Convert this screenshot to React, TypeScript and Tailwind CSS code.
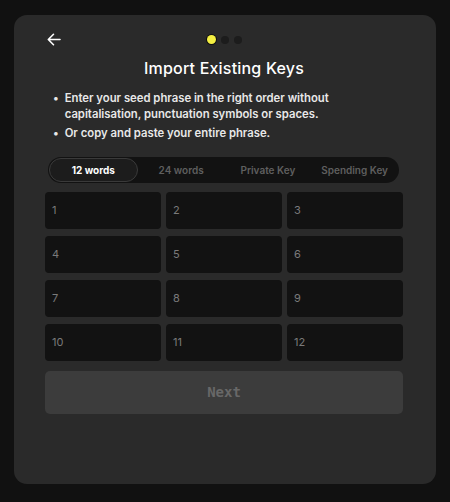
import React from "react";

const tabs = ["12 words", "24 words", "Private Key", "Spending Key"];
const words = Array.from({ length: 12 }, (_, i) => i + 1);

const App: React.FC = () => {
  return (
    <div
      className="w-[450px] h-[502px] bg-[#111111] pt-[15px] pl-[14px]"
      style={{ fontFamily: "Inter, 'Noto Sans', sans-serif" }}
    >
      <div className="w-[422px] h-[469px] rounded-[13px] bg-[#2a2a2a] pt-[18px] pl-[31px] pr-[33px]">
        {/* Header: back arrow + progress dots */}
        <div className="relative h-[13px] flex items-center">
          <svg
            className="ml-[2px] w-[14px] h-[13px] text-white"
            viewBox="0 0 14 13"
            fill="none"
            stroke="currentColor"
            strokeWidth={1.6}
            strokeLinecap="round"
            strokeLinejoin="round"
          >
            <path d="M13 6.5H1.5M6.5 1.3L1.3 6.5l5.2 5.2" />
          </svg>
          <div className="absolute left-0 right-0 top-0 h-[13px] flex items-center justify-center gap-[5px]">
            <span className="w-[9px] h-[9px] rounded-full bg-[#f4ef42] ring-1 ring-[#111]" />
            <span className="w-[8px] h-[8px] rounded-full bg-[#1c1c1c]" />
            <span className="w-[8px] h-[8px] rounded-full bg-[#1c1c1c]" />
          </div>
        </div>

        <h1 className="mt-[10px] text-center text-white text-[16px] leading-[24px] font-medium tracking-[0.2px]">
          Import Existing Keys
        </h1>

        <ul className="mt-[10px] pl-[8px] pr-[10px] text-[#e8e8e8] text-[11.3px] font-semibold">
          <li className="flex gap-[6px] leading-[16px]">
            <span>•</span>
            <span>
              Enter your seed phrase in the right order without capitalisation,
              punctuation symbols or spaces.
            </span>
          </li>
          <li className="flex gap-[6px] leading-[16px] mt-[3px]">
            <span>•</span>
            <span>Or copy and paste your entire phrase.</span>
          </li>
        </ul>

        {/* Tabs */}
        <div className="mt-[16px] ml-[3px] mr-[4px] h-[26px] rounded-full bg-[#121212] flex items-center p-[1px]">
          {tabs.map((t, i) => (
            <div
              key={t}
              className={
                i === 0
                  ? "flex-1 h-[24px] rounded-full bg-[#1c1c1c] border border-[#3a3a3a] flex items-center justify-center text-white text-[10px] font-bold"
                  : "flex-1 h-[24px] flex items-center justify-center text-[#5f5f5f] text-[10px] font-semibold"
              }
            >
              {t}
            </div>
          ))}
        </div>

        {/* Word inputs */}
        <div className="mt-[9px] grid grid-cols-3 gap-x-[5px] gap-y-[7px]">
          {words.map((n) => (
            <div
              key={n}
              className="h-[37px] rounded-[4px] bg-[#121212] flex items-center pl-[7px] text-[#7a7a7a] text-[11px]"
            >
              {n}
            </div>
          ))}
        </div>

        <button
          className="mt-[10px] w-full h-[43px] rounded-[5px] bg-[#3c3c3c] text-[#686868] text-[14px] font-bold"
          style={{ fontFamily: "'DejaVu Sans Mono', monospace" }}
        >
          Next
        </button>
      </div>
    </div>
  );
};

export default App;
